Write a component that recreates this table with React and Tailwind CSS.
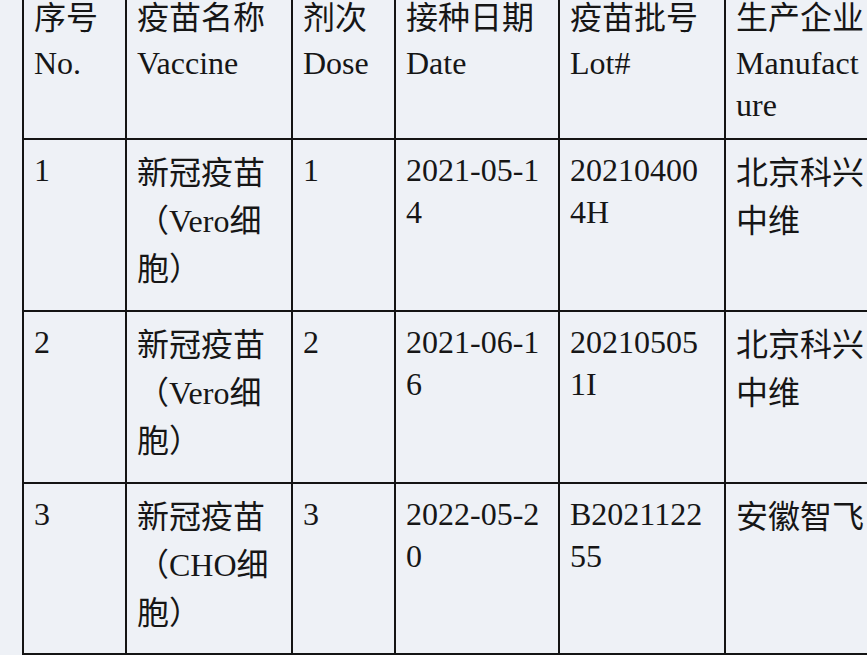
import React from "react";

const headers = [
  ["序号", "No."],
  ["疫苗名称", "Vaccine"],
  ["剂次", "Dose"],
  ["接种日期", "Date"],
  ["疫苗批号", "Lot#"],
  ["生产企业", "Manufacture"],
];

const rows = [
  ["1", "新冠疫苗（Vero细胞）", "1", "2021-05-14", "202104004H", "北京科兴中维"],
  ["2", "新冠疫苗（Vero细胞）", "2", "2021-06-16", "202105051I", "北京科兴中维"],
  ["3", "新冠疫苗（CHO细胞）", "3", "2022-05-20", "B202112255", "安徽智飞"],
];

// columns 1 and 5 hold Chinese text, their lines sit a bit further apart
const cjkCols = [1, 5];

function Cell({ className = "", children }) {
  return (
    <div className={"bg-[#eef1f6] pl-[10px] pr-[17px] break-all " + className}>
      {children}
    </div>
  );
}

export default function App() {
  return (
    <div
      className="w-full h-[655px] overflow-hidden bg-[#eef1f6] text-[#161616] text-[32px] leading-[42px]"
      style={{ fontFamily: '"Liberation Serif", "Noto Sans CJK SC", serif' }}
    >
      <div className="ml-[22px] -mt-[15px] w-max grid grid-cols-[101px_164px_101px_162px_164px_164px] grid-rows-[151px_170px_170px_169px] gap-[2px] p-[2px] bg-[#141414]">
        {headers.map(([zh, en]) => (
          <Cell key={en} className="pt-[7px]">
            <div className="leading-[48px]">{zh}</div>
            <div>{en}</div>
          </Cell>
        ))}
        {rows.map((row) =>
          row.map((text, i) =>
            cjkCols.includes(i) ? (
              <Cell key={row[0] + "-" + i} className="pt-[9px] leading-[48px]">
                {text}
              </Cell>
            ) : (
              <Cell key={row[0] + "-" + i} className="pt-[9px]">
                {text}
              </Cell>
            )
          )
        )}
      </div>
    </div>
  );
}
